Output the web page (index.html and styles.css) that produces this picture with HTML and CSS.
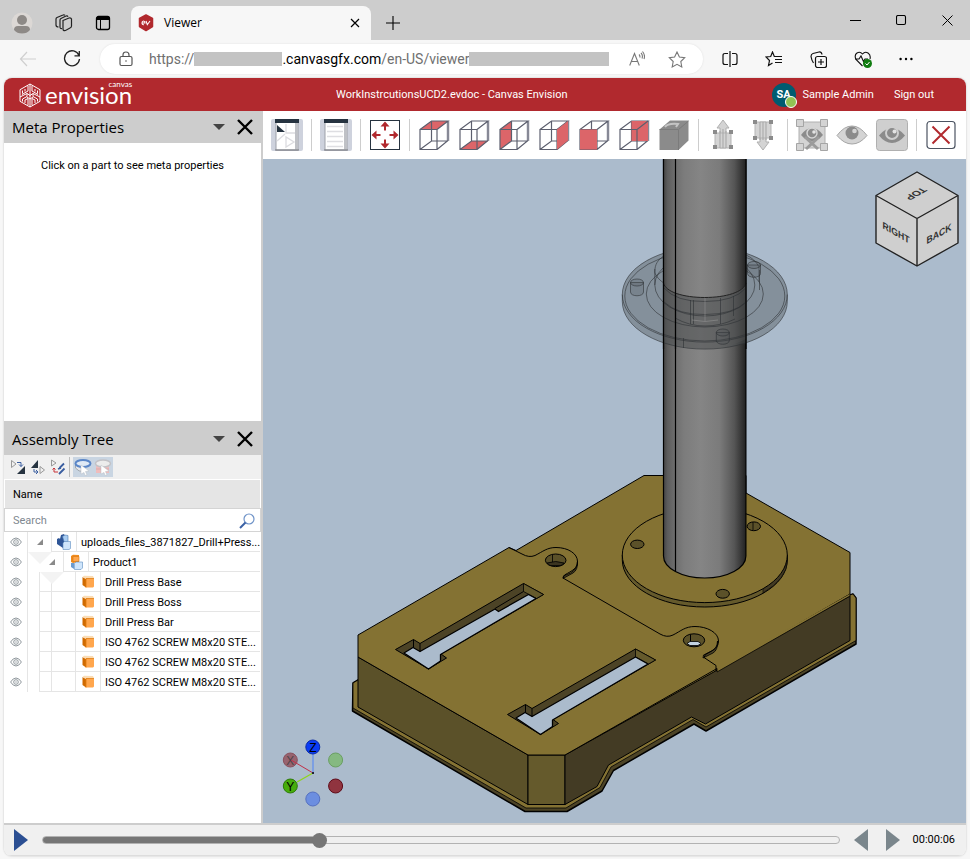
FILE: index.html
```html
<!DOCTYPE html>
<html lang="en">
<head>
<meta charset="UTF-8">
<meta name="viewport" content="width=device-width, initial-scale=1.0">
<title>Viewer</title>
<link rel="stylesheet" href="styles.css">
</head>

<body>

<!-- SHARED ICONS -->
<svg class="defs" width="0" height="0" aria-hidden="true">
<defs>
<symbol id="eye" viewBox="0 0 12 10"><path d="M.6 5Q3 1 6 1t5.400 4Q9 9 6 9T.6 5z" fill="none" stroke="#8f979c"/><circle cx="6" cy="5" r="2.300" fill="none" stroke="#8f979c"/><circle cx="6" cy="5" r=".7" fill="#8f979c"/></symbol>
<symbol id="part" viewBox="0 0 12 13"><path d="M.5 2 4 4v8.500L.5 10z" fill="#d06a00"/><path d="M.5 2 2 .7l9 .3 1 2-8 1z" fill="#fbdcb4"/><path d="M4 3.500h8v8l-1 1H4z" fill="#ffa64d"/><path d="M4 12.500V3.500h8" fill="none" stroke="#e07c10" stroke-width=".8"/></symbol>
<symbol id="wire" viewBox="0 0 32 32"><path d="M30 2v20" fill="none" stroke="#c9c9d2" stroke-width="3"/><path d="M2 10.500h17v20H2zM2 10.500 13.500 2H30L19 10.500M30 2v19.500L19 30.500M2 30.500 13.500 22H30M13.500 2v20" fill="none" stroke="#5c5f6e" stroke-width="1.200"/></symbol>
<symbol id="close" viewBox="0 0 16 16"><path d="M1 1l14 14M15 1 1 15" stroke="#000" stroke-width="2.400"/></symbol>
</defs>
</svg>

<!-- TABS -->
<header class="tabstrip">
<div class="tab-tools">
<button aria-label="Profile"><svg width="22" height="22" viewBox="0 0 22 22"><circle cx="11" cy="11" r="10.500" fill="#dcd8d5"/><circle cx="11" cy="8" r="5" fill="#8d8986"/><path d="M3 18q0-4 4-4h8q4 0 4 4-3 3.500-8 3.500T3 18z" fill="#8d8986"/></svg></button>
<button aria-label="Workspaces"><svg width="18" height="18" viewBox="0 0 18 18" fill="none" stroke="#222" stroke-width="1.200"><path d="M8 6.500 14 4q2-.5 2.500 1v7q0 1.500-1.500 2l-4.500 2.500Q8 17 8 15z"/><path d="M7 14.500q-2 .5-2-1.500V6q0-1 1-1.500L11 2q1.500-.5 2 .8"/><path d="M3.500 13Q1 13 1 11V5q0-1 1-1.500L8 1q1-.5 2 .3"/></svg></button>
<button aria-label="Tab actions"><svg width="16" height="16" viewBox="0 0 16 16"><rect x="1.500" y="1.500" width="13" height="13" rx="2" fill="none" stroke="#000" stroke-width="1.300"/><path d="M1.500 5V3q0-1.500 1.500-1.500h10q1.500 0 1.500 1.500v2z"/><path d="M5.500 5v9.500" stroke="#000"/></svg></button>
</div>
<div class="tab">
<svg width="16" height="18" viewBox="0 0 16 18"><path d="M8 1l6.500 3.500v8L8 16.500 1.500 12.500v-8z" fill="#b1292e" stroke="#b1292e" stroke-width="1.500" stroke-linejoin="round"/><path d="M4 9h3q0-2-1.500-2T4 9t2 1.700M8 7l1.300 3.700L12 7" fill="none" stroke="#fff" stroke-width="1.100"/></svg>
<span class="tab-title">Viewer</span>
<button aria-label="Close tab"><svg width="10" height="10" viewBox="0 0 10 10"><path d="M1 1l8 8M9 1 1 9" stroke="#000" stroke-width="1.200"/></svg></button>
</div>
<button class="new-tab" aria-label="New tab"><svg width="14" height="14" viewBox="0 0 14 14"><path d="M7 0v14M0 7h14" stroke="#000" stroke-width="1.100"/></svg></button>
<div class="win-buttons">
<button aria-label="Minimize"><svg width="11" height="11" viewBox="0 0 11 11"><path d="M0 5.500h11" stroke="#000"/></svg></button>
<button aria-label="Maximize"><svg width="11" height="11" viewBox="0 0 11 11"><rect x=".5" y=".5" width="9" height="9" rx="1.500" fill="none" stroke="#000" stroke-width="1.100"/></svg></button>
<button aria-label="Close window"><svg width="11" height="11" viewBox="0 0 11 11"><path d="M.5.5l10 10M10.500.5l-10 10" stroke="#000"/></svg></button>
</div>
</header>

<!-- ADDRESS BAR -->
<nav class="addressbar">
<button aria-label="Back"><svg width="18" height="16" viewBox="0 0 18 16"><path d="M17 8H1.500M8 1 1.500 8 8 15" fill="none" stroke="#cfcfcf" stroke-width="1.200"/></svg></button>
<button aria-label="Refresh"><svg width="18" height="18" viewBox="0 0 18 18"><path d="M16 5.500A7.500 7.500 0 1 0 16.500 9M16.300 1v4.800h-4.800" fill="none" stroke="#222" stroke-width="1.300"/></svg></button>
<div class="url">
<svg class="lock" width="14" height="16" viewBox="0 0 14 16" fill="none" stroke="#555" stroke-width="1.200"><rect x="1" y="5.500" width="12" height="9" rx="1.500"/><path d="M4 5.500V4q0-3 3-3t3 3v1.500"/><circle cx="7" cy="10" r=".8" fill="#555" stroke="none"/></svg>
<div class="url-text">https://<i class="mask"></i><b>.canvasgfx.com</b>/en-US/viewer<i class="mask wide"></i></div>
<button aria-label="Read aloud"><svg width="16" height="16" viewBox="0 0 16 16" fill="none" stroke="#777" stroke-width="1.100"><path d="M.7 14.500 5.500 2.500l4.800 12M2.300 10.500h6.400M10 3.500q1.300 1.300.8 3M12 2q2.200 2.200 1 5.500M13.500.5q3 3.500 1.500 7.500"/></svg></button>
<button aria-label="Favorite"><svg width="18" height="17" viewBox="0 0 18 17"><path d="M9 1l2.400 5 5.300.7-3.900 3.800 1 5.400L9 13.300l-4.800 2.600 1-5.400L1.300 6.700 6.600 6z" fill="none" stroke="#777" stroke-width="1.100"/></svg></button>
</div>
<div class="nav-tools">
<button aria-label="Split screen"><svg width="16" height="16" viewBox="0 0 16 16" fill="none" stroke="#111" stroke-width="1.200"><path d="M6 2.500H3q-2 0-2 2v7q0 2 2 2h3M10 2.500h3q2 0 2 2v7q0 2-2 2h-3M8 0v16"/></svg></button>
<button aria-label="Favorites"><svg width="18" height="16" viewBox="0 0 18 16" fill="none" stroke="#111" stroke-width="1.200"><path d="M13 5.500H9.300L7.500 1 5.700 5.500 1 6l3.500 3.500-1 5 4-2.500M10 8.500h7M10 11.500h7M13 5.500h4"/></svg></button>
<button aria-label="Collections"><svg width="17" height="17" viewBox="0 0 17 17" fill="none" stroke="#111" stroke-width="1.200"><rect x="5.500" y="5.500" width="11" height="11" rx="2"/><path d="M11 8v6M8 11h6M3.500 12Q1.500 9 1 5.500 1 3 3 2.500L9 1q2.500-.3 3 2.500"/></svg></button>
<button aria-label="Browser essentials"><svg width="18" height="17" viewBox="0 0 18 17"><path d="M8.500 15 2 8.500Q0 4 3 2q3-2 5.500 1Q11 0 14 2t2 6M1 8h4l2-3 2.500 5.500L11 8h3" fill="none" stroke="#111" stroke-width="1.100"/><circle cx="13.500" cy="12.500" r="4.500" fill="#107c10"/><path d="M11.500 12.500l1.500 1.500 2.500-3" fill="none" stroke="#fff"/></svg></button>
<button aria-label="Settings and more"><svg width="14" height="4" viewBox="0 0 14 4"><circle cx="1.600" cy="2" r="1.200"/><circle cx="7" cy="2" r="1.200"/><circle cx="12.400" cy="2" r="1.200"/></svg></button>
</div>
</nav>

<!-- APP -->
<main class="app">
<header class="app-header">
<div class="brand">
<svg width="22" height="25" viewBox="0 0 22 25" fill="none" stroke="#fff" stroke-width="1"><path d="M11 1l10 5.700v11.600L11 24 1 18.300V6.700z"/><path d="M11 1v23M9 3v5L3 11.500M13 3v5l6 3.500M3.500 7.500v3M18.500 7.500v3M6 6v2.500M16 6v2.500M1 14l7-3.500v3L3.500 16v2.500M21 14l-7-3.500v3l4.500 2.500v2.500M6 20v-3l3-1.500V22M16 20v-3l-3-1.500V22M8 10.500l3 2 3-2M8 14l3 2 3-2"/></svg>
<span class="brand-name"><small>canvas</small>envision</span>
</div>
<span class="doc-name">WorkInstrcutionsUCD2.evdoc - Canvas Envision</span>
<div class="account">
<span class="avatar">SA<i></i></span>
<span>Sample Admin</span>
<a href="#">Sign out</a>
</div>
</header>

<div class="workspace">

<aside class="side">
<section class="panel meta">
<div class="panel-head"><h2>Meta Properties</h2><button aria-label="Panel menu"><i class="caret"></i></button><button aria-label="Close Meta Properties"><svg width="16" height="16"><use href="#close"/></svg></button></div>
<p class="hint">Click on a part to see meta properties</p>
</section>

<section class="panel assembly">
<div class="panel-head"><h2>Assembly Tree</h2><button aria-label="Panel menu"><i class="caret"></i></button><button aria-label="Close Assembly Tree"><svg width="16" height="16"><use href="#close"/></svg></button></div>
<div class="tree-tools">
<button aria-label="Expand selection"><svg width="16" height="16" viewBox="0 0 16 16"><path d="M1.500 1.500v7L6 5z" fill="none" stroke="#999"/><path d="M15 7v8H7z" fill="#263340"/><path d="M7 3.500h4v4M9 5.500l2 2 2-2" fill="none" stroke="#3a5ea0"/></svg></button>
<button aria-label="Collapse selection"><svg width="16" height="16" viewBox="0 0 16 16"><path d="M8 1v8H1z" fill="#263340"/><path d="M10 7.500v7l4.500-3.500z" fill="none" stroke="#999"/><path d="M4 10v3h4M6 11l2 2-2 2" fill="none" stroke="#3a5ea0"/></svg></button>
<button aria-label="Tree settings"><svg width="16" height="16" viewBox="0 0 16 16"><path d="M1.500 1v6L6 4z" fill="none" stroke="#999"/><path d="M4 9v4h4M2.500 10.500 4 9l1.500 1.500" fill="none" stroke="#c9343a"/><path d="M9 15l5.500-5.500M14 4.500 9.500 9M8 10l3-1" stroke="#3a5ea0" stroke-width="1.800"/></svg></button>
<span class="toggles">
<button aria-label="Select parts"><svg width="18" height="18" viewBox="0 0 18 18"><path d="M1.500 6v4q3 4 8 3.500" fill="#e8e8ea" stroke="#a0a8b0"/><ellipse cx="9" cy="5.500" rx="7.500" ry="3.500" fill="#dfe9f5" stroke="#5a86c8" stroke-width="2"/><path d="M7 7l8 6-3.500.5L13 17l-2 .5-1-3-3 1.500z" fill="#fff" stroke="#b9bec4" stroke-width=".5"/></svg></button>
<button aria-label="Select assemblies"><svg width="18" height="18" viewBox="0 0 18 18"><path d="M2 7h13v8H2z" fill="#f0bcbc"/><ellipse cx="9" cy="5.500" rx="7.500" ry="3.500" fill="#ececec" stroke="#c2c2c6" stroke-width="1.500"/><path d="M2 11h13" stroke="#d8aaaa"/><path d="M7 7l8 6-3.500.5L13 17l-2 .5-1-3-3 1.500z" fill="#fff" stroke="#b9bec4" stroke-width=".5"/></svg></button>
</span>
</div>
<div class="tree-head">Name</div>
<div class="search"><input type="search" placeholder="Search" aria-label="Search"><svg width="16" height="16" viewBox="0 0 16 16"><circle cx="10" cy="6" r="5" fill="#fff" stroke="#6f93c8" stroke-width="1.200"/><path d="M6.500 9.500 1 15" stroke="#3b61a5" stroke-width="2"/></svg></div>

<ul class="tree">
<li><button class="see" aria-label="Toggle visibility"><svg width="12" height="10"><use href="#eye"/></svg></button><button class="fold open" aria-label="Collapse"></button><span class="kind"><svg width="14" height="16" viewBox="0 0 14 16"><path d="M0 5l2-1 1 1 1-4 3-1 1 2v10l-2 2-6-4z" fill="#2e5597"/><path d="M5.500 2.500 8 1l3 .5v6H7z" fill="#a9cdf2" stroke="#4c78b0" stroke-width=".6"/><path d="M6 9 7.500 7.500h6v7L12 15.500H6z" fill="#cfe5fb" stroke="#5c8cc0" stroke-width=".6"/></svg></span><span class="name">uploads_files_3871827_Drill+Press...</span></li>
<li><button class="see" aria-label="Toggle visibility"><svg width="12" height="10"><use href="#eye"/></svg></button><i class="gap"></i><button class="fold open" aria-label="Collapse"></button><span class="kind"><svg width="13" height="16" viewBox="0 0 13 16"><path d="M1 2 3 .7l6 .3v7L3 9 1 8z" fill="#f08a1c"/><path d="M3 2.500h6v5H3z" fill="#ffa64d" stroke="#d9780f" stroke-width=".6"/><path d="M1 9h3v6L1 13z" fill="#6b9bd0"/><path d="M4.500 9.500 6 8h6.500v6L11 15.500H4.500z" fill="#cfe5fb" stroke="#5c8cc0" stroke-width=".6"/></svg></span><span class="name">Product1</span></li>
<li><button class="see" aria-label="Toggle visibility"><svg width="12" height="10"><use href="#eye"/></svg></button><i class="gap line"></i><i class="gap line low"></i><i class="gap wide"></i><span class="kind"><svg width="12" height="13"><use href="#part"/></svg></span><span class="name">Drill Press Base</span></li>
<li><button class="see" aria-label="Toggle visibility"><svg width="12" height="10"><use href="#eye"/></svg></button><i class="gap line"></i><i class="gap line low"></i><i class="gap wide"></i><span class="kind"><svg width="12" height="13"><use href="#part"/></svg></span><span class="name">Drill Press Boss</span></li>
<li><button class="see" aria-label="Toggle visibility"><svg width="12" height="10"><use href="#eye"/></svg></button><i class="gap line"></i><i class="gap line low"></i><i class="gap wide"></i><span class="kind"><svg width="12" height="13"><use href="#part"/></svg></span><span class="name">Drill Press Bar</span></li>
<li><button class="see" aria-label="Toggle visibility"><svg width="12" height="10"><use href="#eye"/></svg></button><i class="gap line"></i><i class="gap line low"></i><i class="gap wide"></i><span class="kind"><svg width="12" height="13"><use href="#part"/></svg></span><span class="name">ISO 4762 SCREW M8x20 STE...</span></li>
<li><button class="see" aria-label="Toggle visibility"><svg width="12" height="10"><use href="#eye"/></svg></button><i class="gap line"></i><i class="gap line low"></i><i class="gap wide"></i><span class="kind"><svg width="12" height="13"><use href="#part"/></svg></span><span class="name">ISO 4762 SCREW M8x20 STE...</span></li>
<li><button class="see" aria-label="Toggle visibility"><svg width="12" height="10"><use href="#eye"/></svg></button><i class="gap line"></i><i class="gap line low"></i><i class="gap wide"></i><span class="kind"><svg width="12" height="13"><use href="#part"/></svg></span><span class="name">ISO 4762 SCREW M8x20 STE...</span></li>
</ul>
</section>
</aside>

<div class="viewer">
<!-- TOOLBAR -->
<div class="toolbar">
<button aria-label="Assembly tree"><svg width="32" height="32" viewBox="0 0 32 32"><rect width="32" height="32" rx="2" fill="#ced2dd"/><path d="M5 1h22v30H5z" fill="#fff" stroke="#9da0a8"/><path d="M24 4h3v27h-3z" fill="#bfc1c6"/><path d="M4 0h24v4H4z" fill="#263340"/><path d="M6 6v7h8z" fill="#263340"/><path d="M15 5v9h9M6 22l8-7M15 18v10l8-5z" fill="none" stroke="#dcdce0" stroke-width="1.300"/><path d="M4 31h24" stroke="#77797f"/></svg></button>
<i></i>
<button aria-label="Properties"><svg width="32" height="32" viewBox="0 0 32 32"><rect width="32" height="32" rx="2" fill="#ced2dd"/><path d="M5 1h22v30H5z" fill="#fff" stroke="#9da0a8"/><path d="M24 4h3v27h-3z" fill="#bfc1c6"/><path d="M4 0h24v4H4z" fill="#263340"/><path d="M7 7.500h16M7 12.500h16M7 17.500h16M7 22.500h16M7 27.500h16" stroke="#dedee2" stroke-width="1.500"/><path d="M4 31h24" stroke="#77797f"/></svg></button>
<i></i>
<button aria-label="Fit all"><svg width="32" height="32" viewBox="0 0 32 32"><rect x="1.500" y="1.500" width="29" height="29" fill="#fff" stroke="#263340"/><path d="M16 2.500l4.500 5H17v4h-2v-4h-3.500zM16 29.500l4.500-5H17v-4h-2v4h-3.500zM2.500 16l5-4.500V15h4v2h-4v3.500zM29.500 16l-5-4.500V15h-4v2h4v3.500z" fill="#b1292e"/></svg></button>
<i></i>
<button aria-label="Top view"><svg width="32" height="32" viewBox="0 0 32 32"><path d="M2 10.500 13.500 2H30L19 10.500z" fill="#dc6569"/><use href="#wire"/></svg></button>
<button aria-label="Bottom view"><svg width="32" height="32" viewBox="0 0 32 32"><path d="M2 30.500 13.500 22H30L19 30.500z" fill="#dc6569"/><use href="#wire"/></svg></button>
<button aria-label="Left view"><svg width="32" height="32" viewBox="0 0 32 32"><path d="M2 10.500 13.500 2v20L2 30.500z" fill="#dc6569"/><use href="#wire"/></svg></button>
<button aria-label="Right view"><svg width="32" height="32" viewBox="0 0 32 32"><use href="#wire"/><path d="M19 10.500 30 2v19.500l-11 9z" fill="#dc6569"/></svg></button>
<button aria-label="Front view"><svg width="32" height="32" viewBox="0 0 32 32"><use href="#wire"/><path d="M2 10.500h17v20H2z" fill="#dc6569"/></svg></button>
<button aria-label="Back view"><svg width="32" height="32" viewBox="0 0 32 32"><use href="#wire"/><path d="M13.500 2H30v20H13.500z" fill="#dc6569"/><path d="M19 22V10.500L30 2M2 10.500h17" fill="none" stroke="#5c5f6e" stroke-width="1.200"/></svg></button>
<button aria-label="Isometric view"><svg width="32" height="32" viewBox="0 0 32 32"><path d="M1.500 10.500 12 1.500h18.500v20l-10 9.500h-19z" fill="#8b8b8b"/><path d="M20.500 11v20M1.500 10.500h19L30.500 2" fill="none" stroke="#7b7b7b"/><path d="M7 8q3-4 13-3l-2 3" fill="none" stroke="#c4c4c4" stroke-width="2"/></svg></button>
<i></i>
<button aria-label="Previous part"><svg width="32" height="32" viewBox="0 0 32 32"><path d="M16 1l6 8h-3v20h-6V9h-3z" fill="#d4d4d4" stroke="#b0b0b0"/><path d="M8 14h16v15H8z" fill="#d4d4d4" stroke="#b5b5b5"/><path d="M13 12v17M16 10v19M19 12v17" stroke="#a5a5a5"/><path d="M6 11h4v4H6zM22 11h4v4h-4zM6 26h4v4H6zM22 26h4v4h-4z" fill="#8b8b8b"/></svg></button>
<button aria-label="Next part"><svg width="32" height="32" viewBox="0 0 32 32"><path d="M16 31l6-8h-3V3h-6v20h-3z" fill="#d4d4d4" stroke="#b0b0b0"/><path d="M8 3h16v16H8z" fill="#d4d4d4" stroke="#b5b5b5"/><path d="M13 3v18M16 3v18M19 3v18" stroke="#a5a5a5"/><path d="M6 1h4v4H6zM22 1h4v4h-4zM6 17h4v4H6zM22 17h4v4h-4z" fill="#8b8b8b"/></svg></button>
<i></i>
<button aria-label="Hide selection"><svg width="32" height="32" viewBox="0 0 32 32"><path d="M3 3h26v26H3z" fill="#d4d4d4" stroke="#b0b0b0"/><path d="M5 16q5-7 11-7t11 7q-5 6-11 6T5 16z" fill="#8b8b8b"/><circle cx="16" cy="14" r="5" fill="#8b8b8b" stroke="#d4d4d4" stroke-width="1.500"/><circle cx="18" cy="13" r="1.800" fill="#e4e4e4"/><path d="M9 18l13 12M23 18 10 30" stroke="#9b9b9b" stroke-width="3"/><path d="M.5.5h7v7h-7zM24.500.5h7v7h-7zM.5 24.500h7v7h-7zM24.500 24.500h7v7h-7z" fill="#d4d4d4" stroke="#a5a5a5"/></svg></button>
<button aria-label="Show all"><svg width="32" height="32" viewBox="0 0 32 32"><path d="M1 16.500Q8 7 16 7t15 9.500Q24 25 16 25T1 16.500z" fill="#d4d4d4" stroke="#a5a5a5"/><circle cx="16" cy="14" r="6.500" fill="#8b8b8b"/><circle cx="18.500" cy="12" r="2.300" fill="#d4d4d4"/></svg></button>
<button aria-label="Isolate"><svg width="32" height="32" viewBox="0 0 32 32"><rect x=".5" y=".5" width="31" height="31" rx="3" fill="#cfcfcf" stroke="#b0b0b0"/><path d="M3 16.500Q9 9 16 9t13 7.500Q23 24 16 24T3 16.500z" fill="#8b8b8b"/><circle cx="16" cy="14" r="6" fill="#8b8b8b" stroke="#cfcfcf" stroke-width="2"/><circle cx="18.500" cy="12.500" r="2" fill="#e4e4e4"/></svg></button>
<i></i>
<button aria-label="Close viewer"><svg width="32" height="32" viewBox="0 0 32 32"><rect x="2" y="2.500" width="28" height="27" rx="3" fill="#fff" stroke="#4b5361" stroke-width="1.200"/><path d="M7.500 7.500l17 17M24.500 7.500l-17 17" stroke="#b1292e" stroke-width="2"/></svg></button>
</div>

<!-- 3D SCENE -->
<svg class="scene" viewBox="263 159 703 664" preserveAspectRatio="xMidYMid slice" role="img" aria-label="Drill press model">
<defs>
<linearGradient id="steel"><stop offset="0" stop-color="#444"/><stop offset=".05" stop-color="#5c5c5c"/><stop offset=".14" stop-color="#6e6e6e"/><stop offset=".25" stop-color="#7c7c7c"/><stop offset=".45" stop-color="#858585"/><stop offset=".68" stop-color="#7b7b7b"/><stop offset=".86" stop-color="#555"/><stop offset="1" stop-color="#222"/></linearGradient>
</defs>

<!-- base -->
<g stroke="#000" stroke-linejoin="round">
<path d="M353 683l5-3 492-85 3-1 3 4v46L706 731l-12-7-80.500 46.500L602 791l-35 20.500h-42L352.500 711z" fill="#4c4326" stroke-width="1.500"/>
<path d="M353 683l5-3 492-85 3-1 3 4v42.500L706 727l-13-7.500L611 767l-11 20.500-34 20.500h-40L353 708z" fill="#847233" stroke-width=".8"/>
<path d="M358 657l170 98v49.500L358 707z" fill="#5b5129"/>
<path d="M528 755h37v49.500h-37z" fill="#655a2c"/>
<path d="M565 755l285-159v44.500L705.500 724l-14-7L608.500 765 597 786.500l-32 18z" fill="#433b24"/>
<path d="M358 635l151-87.500 7 3L644 475.500h102V493l104 59.500V594l-133 77v-2.500L565 755h-37L358 657z" fill="#847233"/>
<path d="M717 668.500V672l133-76v-2" fill="#847233" stroke-width=".8"/>
</g>

<!-- raised plate with lugs -->
<g fill="none" stroke="#000">
<path d="M577.500 561q0 8-7 12l-7 3-.5 2.500 10-5.500q5-3 4.500-12zM717.500 641q0 7-6 10l-8 4-.5 3 10-5q5-3 4.500-12z" fill="#4c4326" stroke-width=".8"/>
<path d="M509 547.500l13 6.500q7 4 13 1.500c8-4 12-8 21-8 12 0 21.500 6 21.500 14 0 7-5 9-13 13.500l-1.500 3 97 56q7 4 13 1c8-4 12-8.500 22-8.500 12 0 23.500 6 23.500 14.500 0 7-5 9-13 13.500l-1.500 3 12 8V671"/>
<ellipse cx="555.700" cy="560.300" rx="10.300" ry="6.300" fill="#5b5129"/><path d="M552.500 555v7M547 563q9-3 17 0l-3 2.500h-11z" fill="#3b3420" stroke-width=".8"/>
<ellipse cx="694" cy="640.300" rx="10.700" ry="6.500" fill="#5b5129"/><path d="M690.500 634.500v7" /><path d="M687 643.500l3-2h8l3 2-3 2h-8z" fill="#c3d2e0" stroke-width=".8"/>
</g>

<!-- slots -->
<g stroke="#000" stroke-linejoin="round">
<path d="M395.500 649.500l18-10 6.500 4 103.500-60 20 11-102.500 59.500 5.500 4-18 11z" fill="#4c4326"/>
<path d="M523.500 583.500l20 11-7 4-13-7z" fill="#655a2c" stroke-width=".8"/>
<path d="M404 653l9-5.500 7 4 75-42.500 3.500 2.500 30-17 7.500 4-95.500 56v6.500l-12 8z" fill="#abbbcc" stroke-width="1.300"/>
<path d="M420 643.500v8M413.500 639.500v8M495 608.500l28.500-17" fill="none"/>
<path d="M507.500 714.500l18-10 6.500 4L635.500 649l20 11L553 719.500l5.500 4-18 11z" fill="#4c4326"/>
<path d="M635.500 649l20 11-7 4-13-7z" fill="#655a2c" stroke-width=".8"/>
<path d="M516 718l9-5.500 7 4L635.500 657l12.500 7-95.500 56v6.500l-12 8z" fill="#abbbcc" stroke-width="1.300"/>
<path d="M532 708.500v8M525.500 704.500v8" fill="none"/>
</g>

<!-- mounting disc -->
<g stroke="#000">
<path d="M622.300 555v5c0 26 37 47 82.500 47s82.500-21 82.500-47v-5z" fill="#655a2c"/>
<path d="M763 588v5q24-14 24.500-33v-5q-2 19-24.500 33z" fill="#433b24" stroke-width=".6"/>
<ellipse cx="704.800" cy="555" rx="82.500" ry="47.600" fill="#847233"/>
<g fill="#5b5129"><ellipse cx="637.300" cy="544.300" rx="6.700" ry="4.200"/><ellipse cx="753.800" cy="526.300" rx="6.700" ry="4.400"/><ellipse cx="722.700" cy="593.800" rx="6.700" ry="4.400"/></g>
<path d="M753 522v8" stroke-width=".8"/>
</g>

<!-- post -->
<path d="M663.500 159v397c0 12 18 22 41.200 22s41.200-10 41.200-22V159z" fill="url(#steel)"/>
<path d="M663.500 159v397c0 12 18 22 41.200 22s41.200-10 41.200-22V159M675.500 159v413" fill="none" stroke="#000" stroke-width="1.200"/>

<!-- flange, see-through -->
<path d="M622.300 294.500v7c0 26.500 37 47.600 82.500 47.600s82.500-21 82.500-47.600v-7c0-26.500-37-47.600-82.500-47.600s-82.500 21-82.500 47.600z" fill="#4a4f53" fill-opacity=".4"/>
<path d="M663.500 283c0 7 18 14 41.200 14s41.200-7 41.200-14v56q-16 9-41 10-26-1-41.400-10z" fill="#565656" fill-opacity=".3"/>
<g fill="none" stroke="#2c3034" stroke-opacity=".65" stroke-width=".9">
<path d="M622.300 294.500v7c0 26.500 37 47.600 82.500 47.600s82.500-21 82.500-47.600v-7"/>
<ellipse cx="704.800" cy="294.500" rx="82.500" ry="47.600"/>
<ellipse cx="704.800" cy="296" rx="80" ry="45"/>
<ellipse cx="704.800" cy="294" rx="58.500" ry="33"/>
<ellipse cx="704.800" cy="285" rx="50" ry="31"/>
<path d="M654.800 269v16M759.500 270v20M654.800 272c0-8 3-12 9-16v27c-6-4-9-9-9-11zM746 255q9 4 13 12v15"/>
<path d="M664 288q12 14 41 13.500 29 0 41-13.500M664 302q14 13 41 12.500 28 0 41-12.500M675 318q14 8 30 8t30-7"/>
<path d="M690.500 300v24M693.500 300v24M720.500 298v26M733.500 296v20M683.500 338v10"/>
<g fill="#4a4f53" fill-opacity=".2"><path d="M630.500 282.500v9.500c0 5 13 5 13 0v-9.500z"/><ellipse cx="637" cy="282.500" rx="6.500" ry="3.500"/><path d="M747.500 265v8.500c0 5 13 5 13 0V265z"/><ellipse cx="754" cy="265" rx="6.500" ry="3.500"/><path d="M716.300 332.500v8c0 5 13 5 13 0v-8z"/><ellipse cx="722.800" cy="332.500" rx="6.500" ry="3.500"/></g>
</g>
<path d="M705 298v23M692 320q13 3 26 0" fill="none" stroke="#999" stroke-opacity=".5"/>
<path d="M663.500 159v124c2 9 20 14.500 41.200 14.500S744 292 746 283V159z" fill="url(#steel)"/>
<path d="M663.500 283c2 9 20 14.500 41.200 14.500S744 292 746 283" fill="none" stroke="#222"/>
<path d="M663.500 159v190M675.500 159v190M746 159v190" stroke="#000" stroke-width="1.200"/>

<!-- view cube -->
<g fill="#cfcfcf" stroke="#222" stroke-width="1.400" stroke-linejoin="round">
<path d="M917 172l41 23.500V243l-41 23-41-23v-47.500z"/>
<path d="M876 195.500l41 23 41-23M917 218.500V266" fill="none"/>
</g>
<g class="cube-text">
<text transform="matrix(.866 .5 0 1 896 236)">RIGHT</text>
<text transform="matrix(.866 -.5 0 1 939 237)">BACK</text>
<text transform="matrix(-.866 .5 -.866 -.5 913 192)">TOP</text>
</g>

<!-- axes -->
<g class="axis-text">
<path d="M313 773v-20" stroke="#6c96ea" stroke-width="1.500"/>
<circle cx="290.300" cy="760" r="7" fill="#97636f" stroke="#8a4f5c"/>
<text x="290.300" y="764.500" fill="#4d4348">X</text>
<path d="M313 773l-22-13" stroke="#c03048"/>
<path d="M313 773l-16 9" stroke="#8fd41c" stroke-width="1.400"/>
<circle cx="312.800" cy="747" r="7" fill="#0b3cf5" stroke="#0a2aa8"/>
<text x="312.800" y="751.500">Z</text>
<circle cx="290.300" cy="786" r="7" fill="#47ad0b" stroke="#2d7a08"/>
<text x="290.300" y="790.500">Y</text>
<circle cx="335.600" cy="760" r="7" fill="#85b981" stroke="#6a9f62"/>
<circle cx="335.600" cy="786" r="7" fill="#90343f" stroke="#5e0a18"/>
<circle cx="312.800" cy="799" r="7" fill="#6c8ee0" stroke="#5570c0"/>
<path d="M312 772h2v2h-2z" fill="#223"/>
</g>
</svg>
</div>
</div>

<!-- TIMELINE -->
<footer class="timeline">
<button aria-label="Play"><svg width="14" height="22" viewBox="0 0 14 22"><path d="M0 0l14 11L0 22z" fill="#2b4f93"/></svg></button>
<input type="range" min="0" max="1000" value="344" aria-label="Timeline">
<button aria-label="Step back"><svg width="14" height="22" viewBox="0 0 14 22"><path d="M14 0 0 11l14 11z" fill="#7a868c"/></svg></button>
<button class="step-next" aria-label="Step forward"><svg width="14" height="22" viewBox="0 0 14 22"><path d="M0 0l14 11L0 22z" fill="#7a868c"/></svg></button>
<time>00:00:06</time>
</footer>
</main>

</body>
</html>
```
FILE: styles.css
```css
*{box-sizing:border-box;}

body{
margin:0;
min-height:100vh;
display:flex;
flex-direction:column;
background:#f7f7f7;
font-family:Roboto,"Open Sans",sans-serif;
font-size:11px;
line-height:16px;
color:#000;
}

button{
padding:0;
border:none;
background:none;
font:inherit;
color:inherit;
display:flex;
align-items:center;
justify-content:center;
flex:none;
}
svg{display:block;flex:none;}
.defs{position:absolute;}

/* TABS */
.tabstrip{
display:flex;
height:40px;
background:#cdcdcd;
}
.tab-tools{
display:flex;
align-items:center;
gap:22px;
width:131px;
padding:6px 0 0 11px;
}
.tab{
display:flex;
align-items:center;
gap:10px;
width:240px;
margin-top:6px;
padding:0 11px 0 7px;
background:#f7f7f7;
border-radius:8px 8px 0 0;
}
.tab-title{
flex:1;
font-family:"Open Sans",sans-serif;
font-size:12px;
}
.new-tab{width:43px;padding-top:5px;}
.win-buttons{
display:flex;
align-items:center;
gap:35px;
margin-left:auto;
padding-right:17px;
}

/* ADDRESS BAR */
.addressbar{
display:flex;
align-items:center;
height:38px;
padding:0 0 0 19px;
}
.addressbar > button{width:18px;margin-right:26px;}
.url{
flex:1;
display:flex;
align-items:center;
gap:16px;
min-width:0;
height:30px;
margin-left:-7px;
padding:0 17px 0 19px;
background:#fff;
border-radius:15px;
box-shadow:0 0 2px #ddd;
}
.url button + button{margin-left:7px;}
.url-text{
flex:1;
display:flex;
align-items:center;
min-width:0;
overflow:hidden;
white-space:nowrap;
font-size:14px;
color:#707070;
}
.url-text b{font-weight:400;color:#000;}
.mask{flex:none;width:88px;height:14px;background:#c3c3c3;}
.mask.wide{width:140px;}
.nav-tools{
display:flex;
align-items:center;
gap:27px;
padding:0 57px 0 19px;
}

/* APP */
.app{
flex:1;
display:flex;
flex-direction:column;
margin:0 4px 3px;
border-radius:8px;
overflow:hidden;
background:#fff;
box-shadow:0 0 2px #bbb;
}
.app-header{
display:flex;
align-items:center;
justify-content:space-between;
height:33px;
padding:1px 32px 0 15px;
background:#b1292e;
color:#fff;
}
.brand{display:flex;align-items:center;gap:4px;}
.brand-name{
display:flex;
flex-direction:column;
font-family:Lato,sans-serif;
font-size:24px;
line-height:16px;
padding-bottom:6px;
}
.brand-name small{
align-self:flex-end;
font-size:8px;
line-height:6px;
}
.account{display:flex;align-items:center;}
.account a{margin-left:20px;color:inherit;text-decoration:none;}
.avatar{
position:relative;
width:24px;
height:24px;
margin-right:7px;
border-radius:50%;
background:#005b70;
font-weight:700;
line-height:24px;
text-align:center;
}
.avatar i{
position:absolute;
right:-1px;
bottom:-1px;
width:12px;
height:12px;
border:1px solid #fff;
border-radius:50%;
background:#92c353;
}
.workspace{flex:1;display:flex;}

/* SIDE PANELS */
.side{
display:flex;
flex-direction:column;
width:259px;
border-right:2px solid #cdcdcd;
}
.meta{height:312px;border-bottom:2px solid #cdcdcd;}
.panel-head{
display:flex;
align-items:center;
gap:12px;
height:32px;
padding:0 8px;
background:#cdcdcd;
}
.panel-head h2{
flex:1;
margin:0;
font-family:"Open Sans",sans-serif;
font-size:15px;
line-height:20px;
font-weight:400;
}
.caret{
border:6px solid transparent;
border-top-color:#444;
border-bottom:none;
}
.hint{margin:15px 0;text-align:center;}

.tree-tools{
display:flex;
align-items:center;
gap:4px;
height:24px;
padding-left:6px;
background:#f0f0f0;
}
.toggles{
display:flex;
gap:2px;
margin-left:3px;
padding:1px;
background:#c9d5e2;
box-shadow:-3px 0 0 #f0f0f0,-4px 0 0 #bbb;
}
.tree-head{
margin:1px 1px 0;
padding:7px 8px 5px;
background:#e5e5e5;
}
.search{
display:flex;
align-items:center;
height:24px;
padding:1px 5px 0 8px;
border:1px solid #d4d4d4;
}
.search input{
flex:1;
min-width:0;
padding:0;
border:none;
outline:none;
font:inherit;
}
.search input::placeholder{color:#808890;}

/* TREE */
.tree{margin:0;padding:0 1px 0 0;list-style:none;}
.tree li{display:flex;height:20px;}
.see{width:24px;border-right:1px solid #e5e5e5;}
.fold{
position:relative;
width:24px;
border-right:1px solid #e5e5e5;
}
.fold::before{
content:"";
border-left:6px solid transparent;
border-bottom:6px solid #8a8a8a;
}
/* pointer hanging under an open node */
.fold.open::after{
content:"";
position:absolute;
left:0;
top:20px;
width:24px;
height:12px;
background:#f3f3f3;
clip-path:polygon(0 0,100% 0,50% 100%);
}
.gap{width:12px;}
.gap.wide{width:24px;border-right:1px solid #e5e5e5;border-bottom:1px solid #e5e5e5;}
.gap.line{border-right:1px solid #e5e5e5;}
.gap.low{border-bottom:1px solid #e5e5e5;}
.kind{
display:flex;
align-items:center;
justify-content:center;
width:25px;
border-right:1px solid #e5e5e5;
border-bottom:1px solid #e5e5e5;
}
.name{
flex:1;
min-width:0;
padding:3px 0 0 4px;
border-bottom:1px solid #e5e5e5;
white-space:nowrap;
}

/* VIEWER */
.viewer{flex:1;display:flex;flex-direction:column;min-width:0;}
.toolbar{
display:flex;
align-items:center;
gap:8px;
height:48px;
padding-left:8px;
}
.toolbar > i{width:1px;height:32px;background:#cdcdcd;}
.scene{
flex:1 1 0;
width:100%;
min-height:0;
background:#abbbcc;
}
.cube-text{
font:700 10px "Liberation Sans",sans-serif;
text-anchor:middle;
fill:#333;
}
.axis-text{
font:12px "Liberation Sans",sans-serif;
text-anchor:middle;
}

/* TIMELINE */
.timeline{
display:flex;
align-items:center;
height:33px;
padding:0 11px 0 10px;
background:#f0f0f0;
border-top:2px solid #cdcdcd;
border-bottom:1px solid #ddd;
}
.timeline input{
--at:34.5%;
appearance:none;
flex:1;
min-width:0;
height:16px;
margin:0 14px;
background:none;
}
.timeline input::-webkit-slider-runnable-track{
height:8px;
border:1px solid #b2b2b2;
border-radius:4px;
background:linear-gradient(to right,#767676 var(--at),#efefef var(--at)) border-box;
}
.timeline input::-webkit-slider-thumb{
appearance:none;
width:15px;
height:15px;
margin-top:-4px;
border-radius:50%;
background:#767676;
}
.step-next{margin:0 13px 0 18px;}
```
